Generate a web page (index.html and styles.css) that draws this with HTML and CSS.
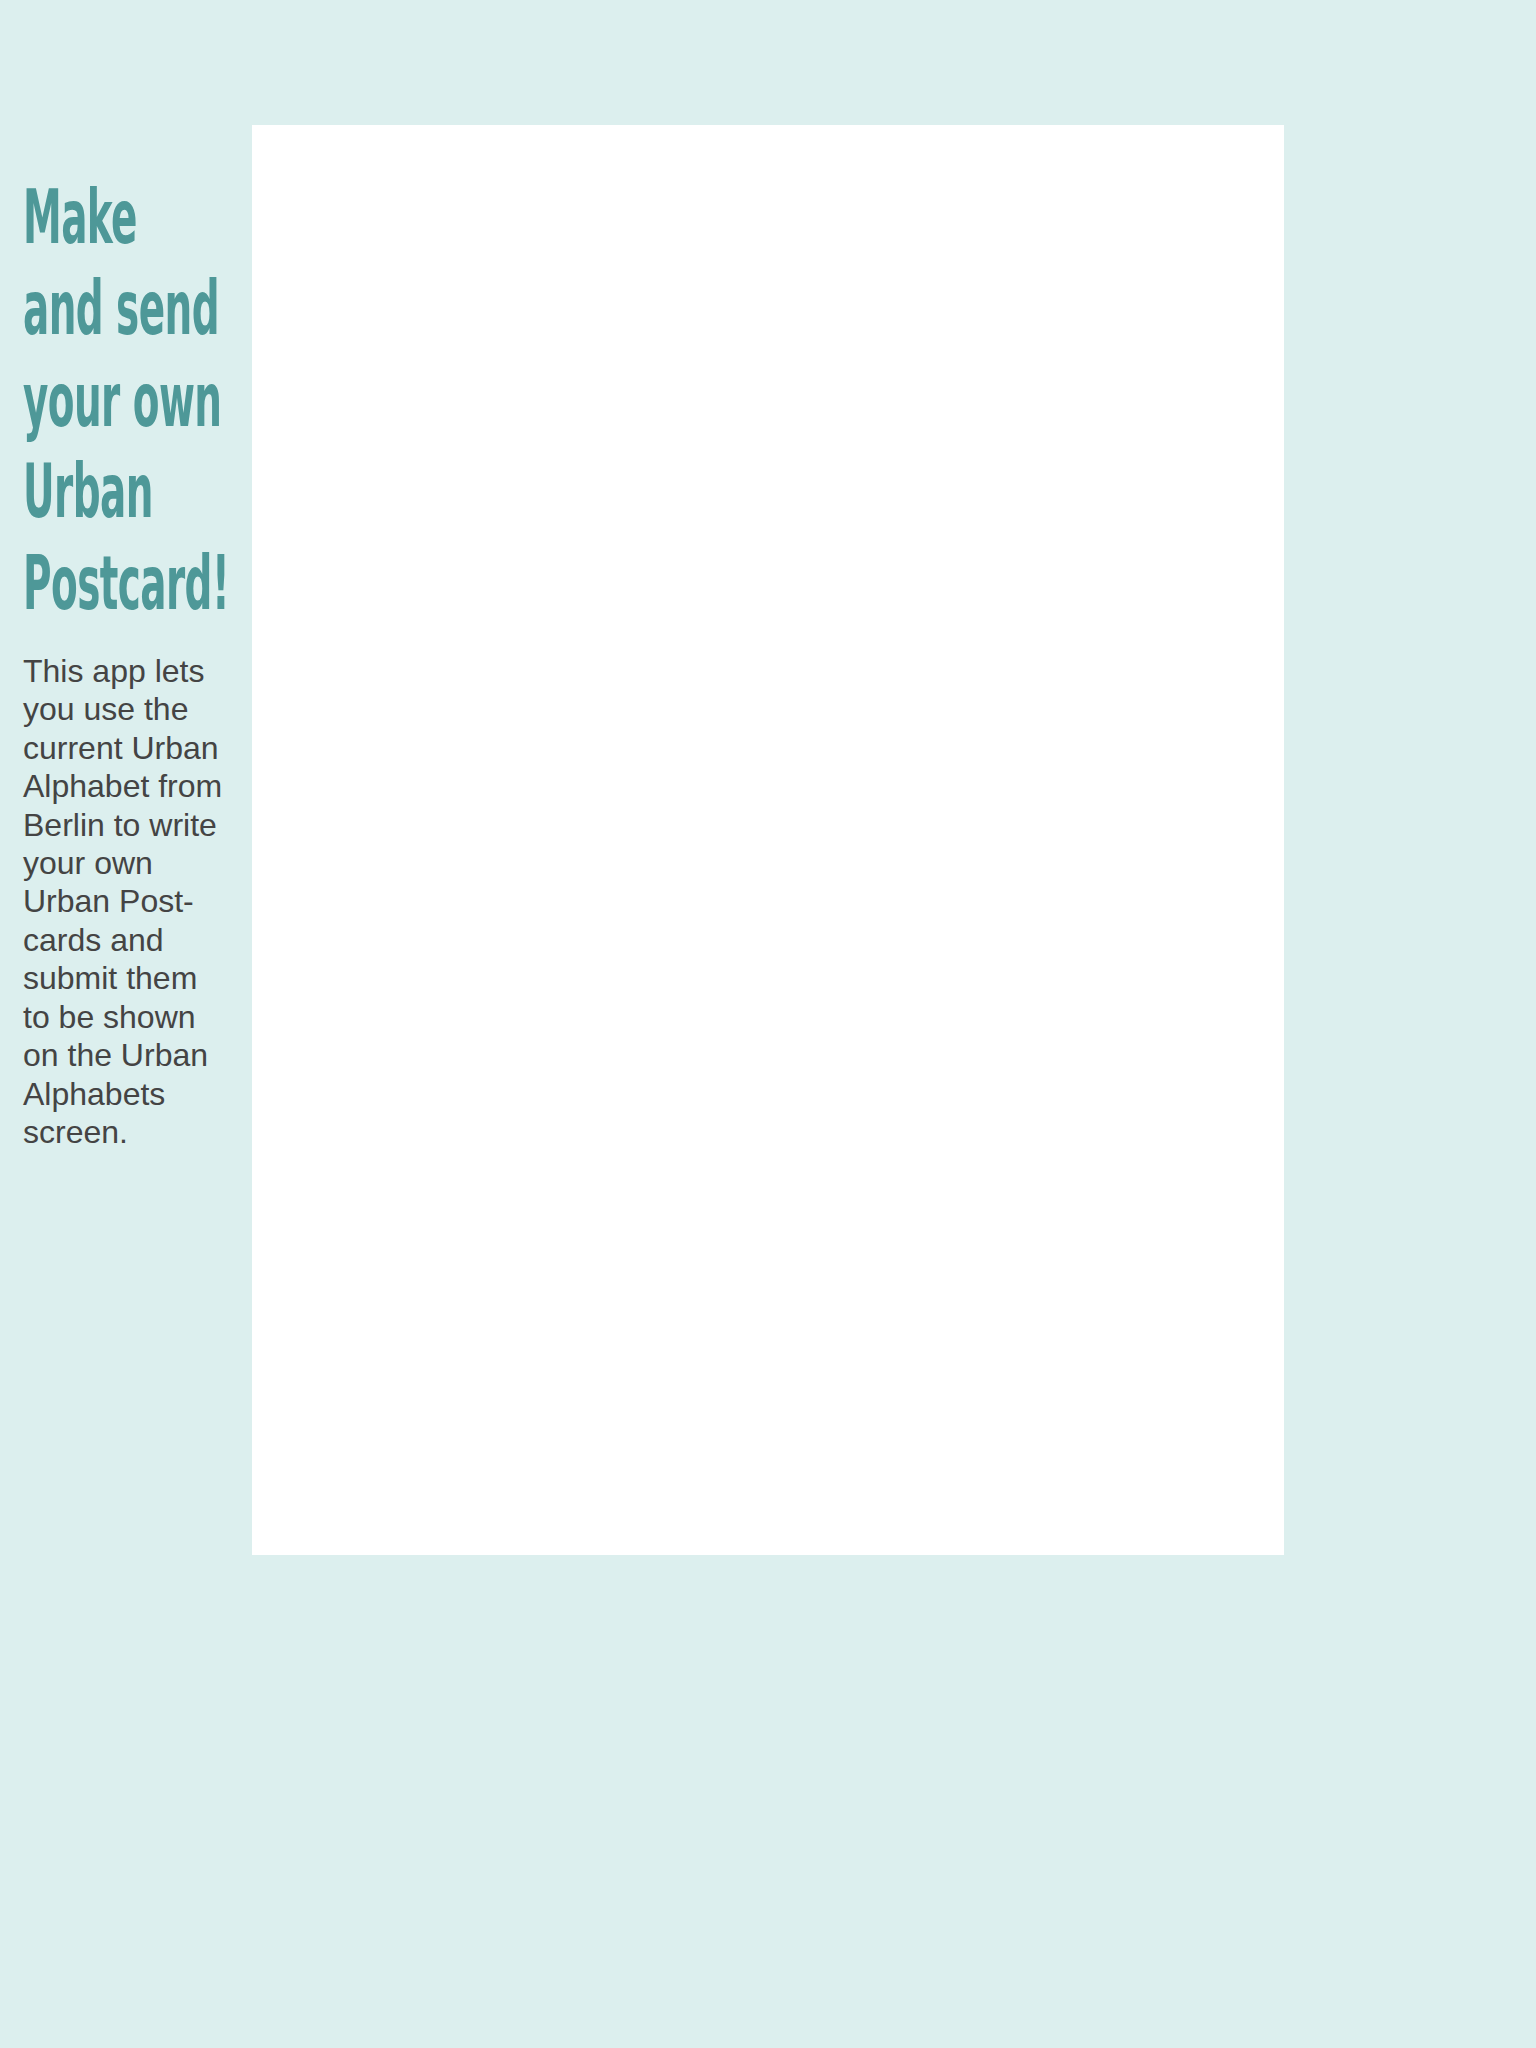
FILE: index.html
```html
<!DOCTYPE html>
<html lang="en">
<head>
<meta charset="utf-8">
<title>Urban Postcard</title>
<link rel="stylesheet" href="styles.css">
</head>
<body>
<div class="page">
  <aside class="intro">
    <h1 class="title"><span>Make</span><span>and send</span><span>your own</span><span>Urban</span><span>Postcard!</span></h1>
    <p class="lead">This app lets you use the current Urban Alphabet from Berlin to write your own Urban Post-cards and submit them to be shown on the Urban Alphabets screen.</p>
  </aside>
  <main class="canvas"></main>
</div>
</body>
</html>
```
FILE: styles.css
```css
html, body {
  margin: 0;
  padding: 0;
  background: #dcefee;
  min-height: 2048px;
}
.page {
  display: flex;
  align-items: flex-start;
}
.intro {
  box-sizing: border-box;
  width: 252px;
  padding: 172px 0 0 23px;
}
.title {
  margin: 0;
  font-family: "DejaVu Sans Condensed", "Liberation Sans", sans-serif;
  font-weight: bold;
  font-size: 74px;
  line-height: 91.4px;
  color: #4e9898;
  display: flex;
  flex-direction: column;
  letter-spacing: -1px;
}
.title span {
  display: block;
  white-space: nowrap;
  transform: scaleX(0.585);
  transform-origin: left center;
}
.lead {
  margin: 23px 0 0 0;
  width: 204px;
  font-family: "Liberation Sans", Arial, sans-serif;
  font-size: 32px;
  line-height: 38.4px;
  color: #444444;
}
.canvas {
  margin-top: 125px;
  width: 1032px;
  height: 1430px;
  background: #ffffff;
}
```
